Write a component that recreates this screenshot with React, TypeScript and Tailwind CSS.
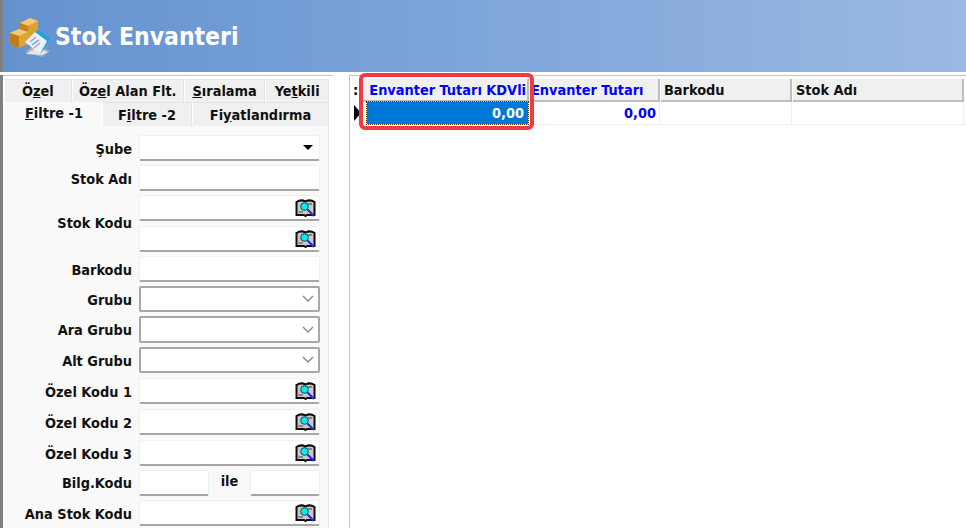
const font = "[font-family:'DejaVu_Sans_Condensed','Noto_Sans',sans-serif]";

function LookupIcon() {
  return (
    <svg width="21" height="20" viewBox="0 0 21 20" className="shrink-0">
      <path d="M1.5 4 Q6 1 10.5 3.5 Q15 1 19.5 4 V17 H12 L10.5 18 L9 17 H1.5 Z" fill="#c9c9c9" stroke="#0c0c0c" strokeWidth="2" />
      <path d="M3.5 14 H8 M13 6 H17" stroke="#444" strokeWidth="1.2" />
      <circle cx="9.5" cy="8.5" r="3.8" fill="#00eeee" stroke="#203040" strokeWidth="0.9" />
      <path d="M12.5 11.5 L19 18" stroke="#2a2ae0" strokeWidth="2.2" />
    </svg>
  );
}

function Logo() {
  return (
    <svg width="40" height="42" viewBox="0 0 40 42" className="shrink-0">
      <path d="M10 7 L20 2 L28 5 V19 L18 24 L10 20 Z" fill="#dca034" />
      <path d="M10 7 L18 10 L28 5 L20 2 Z" fill="#f3cb6c" />
      <path d="M18 10 V24 L10 20 V7 Z" fill="#c48620" />
      <path d="M0 17 L9 13 L18 16 V28 L9 32 L0 28 Z" fill="#e0a336" />
      <path d="M0 17 L9 20 L18 16 L9 13 Z" fill="#f3cb6c" />
      <path d="M9 20 V32 L0 28 V17 Z" fill="#bd7d1a" />
      <path d="M15 36 L25 29 L40 35 L32 41 Z" fill="#aeb1b3" />
      <path d="M16 38 L26 32 L38 36 L32 39 Z" fill="#e4e5e6" />
      <path d="M15 26 L25 16 L40 25 L30 38 Z" fill="#eef1f6" />
      <path d="M25 16 L28 14 L40 22 L40 25 L31 37 L30 38 L37 25 Z" fill="#22a4d8" />
      <path d="M20 26 L26 21 M22 29 L29 24 M24 32 L30 27" stroke="#9aa6d8" strokeWidth="1.6" />
    </svg>
  );
}

function Tab({ className, children }: { className: string; children: React.ReactNode }) {
  return (
    <div className={`flex items-center justify-center pt-[2px] bg-[#f0f0f0] border-t border-r border-[#e4e4e4] text-[14.4px] font-bold text-[#111] ${className}`}>
      <span>{children}</span>
    </div>
  );
}

function Box({ className, combo, children }: { className: string; combo?: boolean; children?: React.ReactNode }) {
  return (
    <div
      className={`flex items-center justify-end pr-[3px] bg-white rounded-[2px] ${
        combo ? "border-2 border-[#a8a8a8]" : "border border-[#f0f0f0] border-b-2 border-b-[#a6a6a6]"
      } ${className}`}
    >
      {children}
    </div>
  );
}

function Field({ label, mt, icon, arrow, combo, h = "h-[26px]" }: { label: string; mt: string; icon?: boolean; arrow?: boolean; combo?: boolean; h?: string }) {
  return (
    <div className={`flex items-center ${mt}`}>
      <div className="w-[127px] pt-[3px] text-right text-[14.4px] font-bold text-[#111]">{label}</div>
      <Box className={`ml-[7px] w-[181px] ${h}`} combo={combo}>
        {icon && <LookupIcon />}
        {arrow && <div className="mr-[3px] w-0 h-0 border-l-[5px] border-r-[5px] border-t-[5px] border-l-transparent border-r-transparent border-t-black" />}
        {combo && (
          <svg width="12" height="8" viewBox="0 0 12 8" className="mr-[1px]">
            <path d="M1 1 L6 6 L11 1" fill="none" stroke="#888" strokeWidth="1.4" />
          </svg>
        )}
      </Box>
    </div>
  );
}

function HeaderCell({ className, children }: { className: string; children: React.ReactNode }) {
  return (
    <div className={`h-[23px] flex items-center pt-[2px] bg-[#f0f0f0] border-r-2 border-b-2 border-[#bdbdbd] text-[14.4px] font-bold whitespace-nowrap overflow-hidden ${className}`}>
      {children}
    </div>
  );
}

export default function App() {
  return (
    <div className={`relative w-[966px] h-[528px] overflow-hidden bg-white flex flex-col ${font}`}>
      <div className="h-[72px] shrink-0 flex items-center pl-[7px] pt-[2px] gap-[5px] border-l-[3px] border-[#808080] bg-gradient-to-r from-[#6492cf] to-[#9ab9e3]">
        <Logo />
        <span className="text-[24.5px] font-bold text-white pt-[1px]">Stok Envanteri</span>
      </div>

      <div className="flex flex-1 min-h-0 pt-[3px]">
        <div className="w-[334px] shrink-0 border-l-[3px] border-[#808080] flex flex-col">
          <div className="h-[1px] mr-[1px] bg-[#c4c4c4]" />
          <div className="flex-1 pl-[2px] pr-[1px] bg-white flex flex-col mr-[3px]">
            <div className="flex h-[23px] mt-[3px] pr-[1px] gap-[1px]">
              <Tab className="w-[67px]">Ö<u>z</u>el</Tab>
              <Tab className="w-[112px]">Öz<u>e</u>l Alan Flt.</Tab>
              <Tab className="w-[81px]"><u>S</u>ıralama</Tab>
              <Tab className="w-[63px]">Ye<u>t</u>kili</Tab>
            </div>
            <div className="flex h-[24px] gap-[1px] pr-[1px]">
              <div className="w-[97px] bg-[#f9f9f9] text-[14.4px] font-bold text-[#111] pl-[20px] pt-[1px]"><u>F</u>iltre -1</div>
              <Tab className="w-[89px]">F<u>i</u>ltre -2</Tab>
              <Tab className="flex-1">Fi<u>y</u>atlandırma</Tab>
            </div>
            <div className="flex-1 bg-[#f9f9f9] border-r border-[#e4e4e4] mr-[1px] pt-[9px]">
              <Field label="Şube" mt="mt-0" arrow />
              <Field label="Stok Adı" mt="mt-[4px]" />
              <div className="flex items-center mt-[4px]">
                <div className="w-[127px] text-right text-[14.4px] font-bold text-[#111]">Stok Kodu</div>
                <div className="ml-[7px] flex flex-col gap-[5px]">
                  <Box className="w-[181px] h-[26px]"><LookupIcon /></Box>
                  <Box className="w-[181px] h-[26px]"><LookupIcon /></Box>
                </div>
              </div>
              <Field label="Barkodu" mt="mt-[4px]" />
              <Field label="Grubu" mt="mt-[4px]" combo />
              <Field label="Ara Grubu" mt="mt-[4px]" combo h="h-[27px]" />
              <Field label="Alt Grubu" mt="mt-[4px]" combo />
              <Field label="Özel Kodu 1" mt="mt-[5px]" icon />
              <Field label="Özel Kodu 2" mt="mt-[5px]" icon />
              <Field label="Özel Kodu 3" mt="mt-[5px]" icon />
              <div className="flex items-center mt-[4px]">
                <div className="w-[127px] pt-[2px] text-right text-[14.4px] font-bold text-[#111]">Bilg.Kodu</div>
                <Box className="ml-[7px] w-[70px] h-[26px]" />
                <div className="w-[41px] text-center text-[14.4px] font-bold text-[#111] -mt-[3px]">ile</div>
                <Box className="w-[70px] h-[26px]" />
              </div>
              <Field label="Ana Stok Kodu" mt="mt-[4px]" icon />
            </div>
          </div>
        </div>

        <div className="w-[15px] shrink-0" />

        <div className="flex-1 min-w-0 border-l border-[#c4c4c4] border-t flex flex-col">
          <div className="flex mt-[3px] pl-[2px] gap-[1px]">
            <div className="w-[9px] text-[14.4px] font-bold leading-[22px] pl-[1px]">:</div>
            <HeaderCell className="w-[167px] text-[#0000ff] justify-end pr-[1px]">Envanter Tutarı KDVli</HeaderCell>
            <HeaderCell className="w-[130px] text-[#0000ff] pl-[1px]">Envanter Tutarı</HeaderCell>
            <HeaderCell className="w-[131px] text-[#111] pl-[3px]">Barkodu</HeaderCell>
            <HeaderCell className="w-[171px] text-[#111] pl-[3px]">Stok Adı</HeaderCell>
          </div>
          <div className="flex h-[23px] border-b border-[#eeeeee] gap-[1px] pl-[2px]">
            <div className="w-[9px] flex items-center pl-[2px]">
              <div className="w-0 h-0 border-t-[8px] border-b-[8px] border-l-[7px] border-t-transparent border-b-transparent border-l-black" />
            </div>
            <div className="w-[161px] ml-[5px] mr-[1px] h-[22px] pt-[2px] bg-[#0078d7] outline-1 outline-dotted outline-[#4a3000] flex items-center justify-end pr-[4px] text-[14.4px] font-bold text-white">0,00</div>
            <div className="w-[130px] pt-[2px] border-r border-[#eeeeee] flex items-center justify-end pr-[3px] text-[14.4px] font-bold text-[#0000ff]">0,00</div>
            <div className="w-[131px] border-r border-[#eeeeee]" />
            <div className="w-[171px] border-r border-[#eeeeee]" />
          </div>
        </div>
      </div>

      {/* red highlight around first column */}
      <div className="absolute left-[359px] top-[73px] w-[175px] h-[57px] border-[4px] border-[#ef3b41] rounded-[6px]" />
    </div>
  );
}
